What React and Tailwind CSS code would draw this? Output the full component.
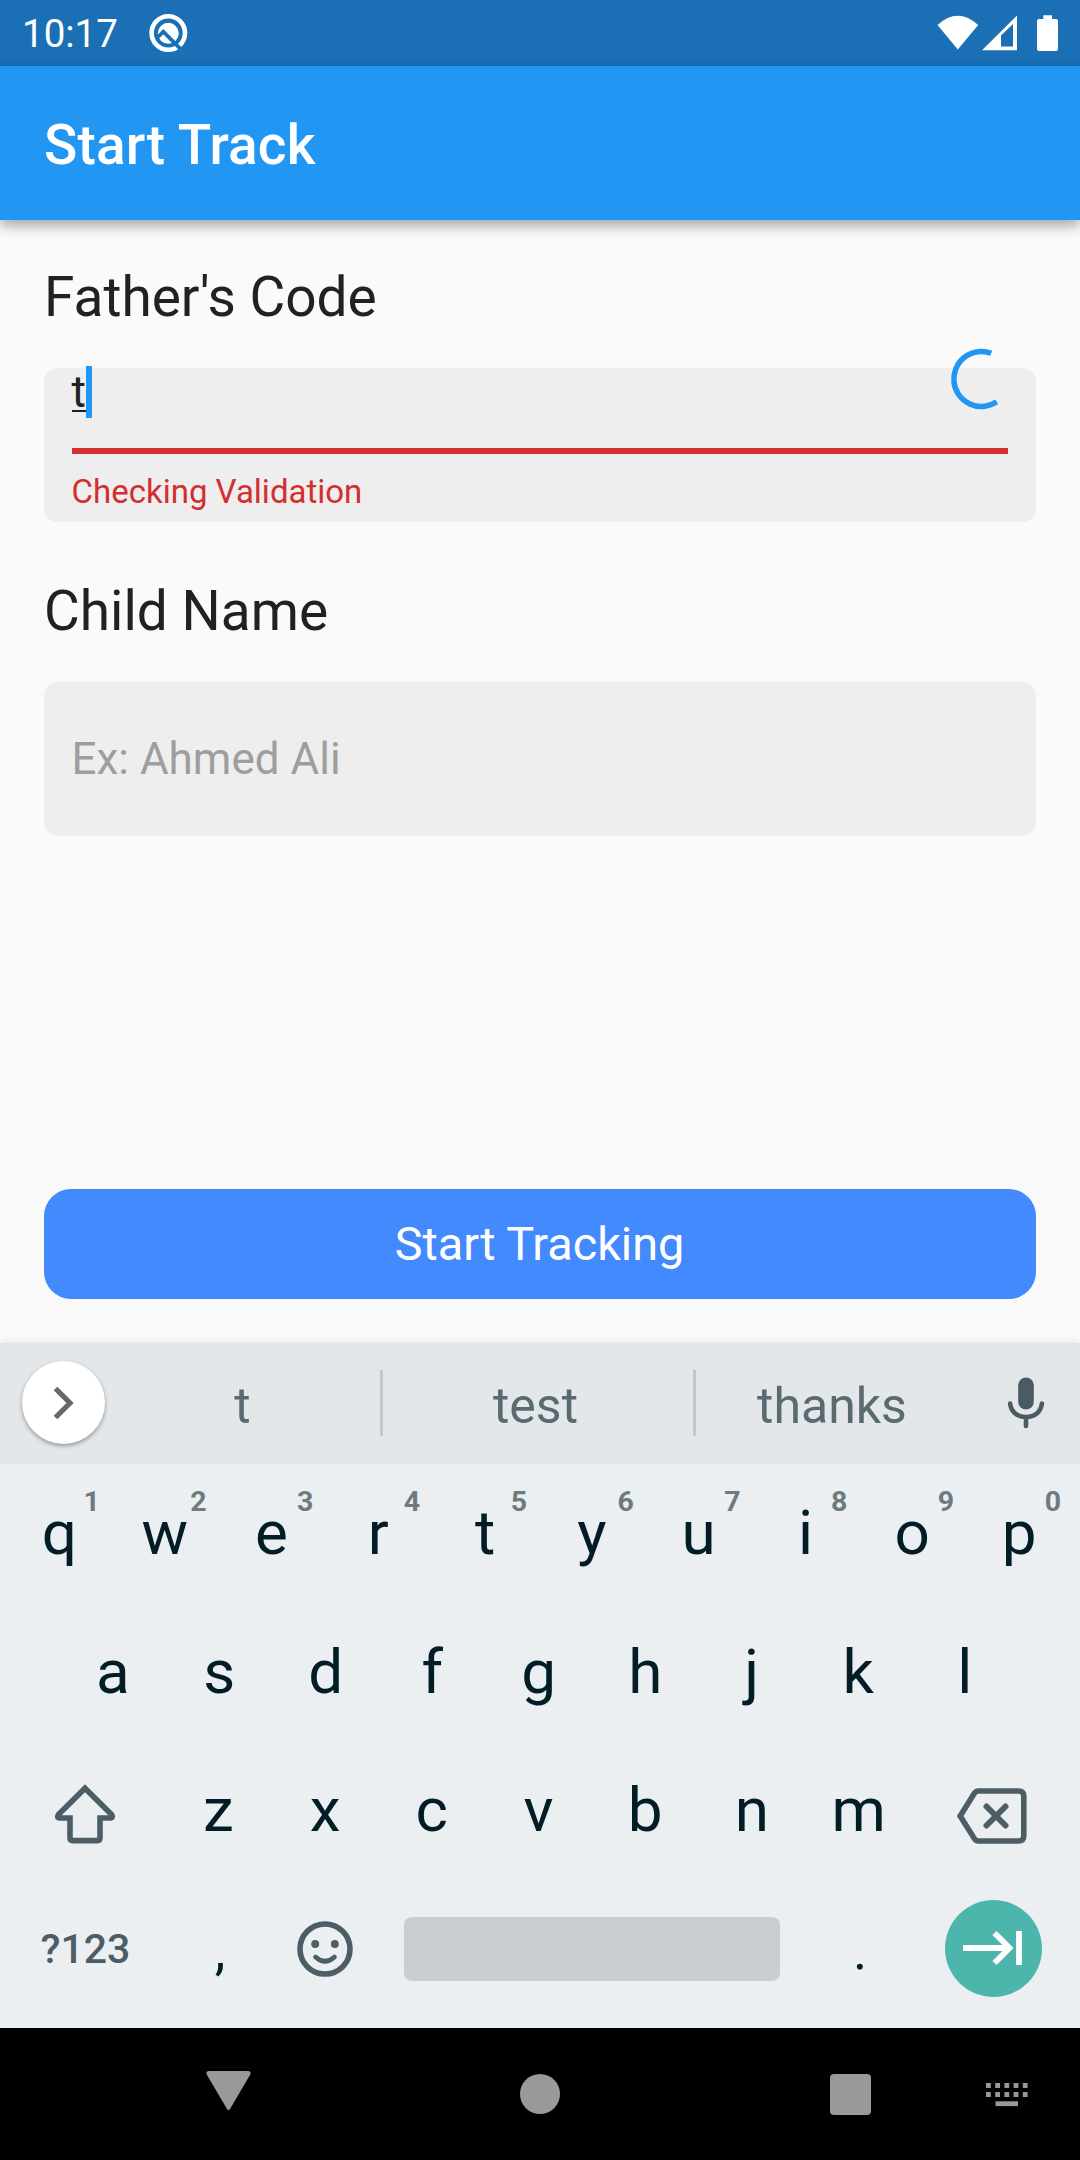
import React from "react";

const topRow = [
  ["q", "1"], ["w", "2"], ["e", "3"], ["r", "4"], ["t", "5"],
  ["y", "6"], ["u", "7"], ["i", "8"], ["o", "9"], ["p", "0"],
];
const homeRow = ["a", "s", "d", "f", "g", "h", "j", "k", "l"];
const bottomRow = ["z", "x", "c", "v", "b", "n", "m"];

function StatusBar() {
  return (
    <div className="flex h-[66px] items-center bg-[#1a6fb5] pl-[22px] pr-[22px] text-white">
      <span className="w-[127px] whitespace-nowrap pt-[2px] text-[38.5px] leading-[66px]">10:17</span>
      <svg className="h-[40px] w-[40px]" viewBox="0 0 40 40" fill="none">
        <circle cx="19.3" cy="20" r="16.7" stroke="#fff" strokeWidth="4.6" />
        <circle cx="19.3" cy="20.3" r="10.5" fill="#fff" />
        <path d="M7.500 25.500L14.300 18.700L34 38.300" stroke="#1a6fb5" strokeWidth="3.800" />
      </svg>
      <svg className="ml-auto h-[36px] w-[42px]" viewBox="0 0 42 36">
        <path d="M.5 10Q20.7-8.5 41.2 10L20.8 34.5Z" fill="#fff" />
      </svg>
      <svg className="ml-[3px] h-[36px] w-[35px]" viewBox="0 0 35 36">
        <path fillRule="evenodd" d="M0 35.2L35 .5V35.2ZM19 31.5H31V9L19 20.5Z" fill="#fff" />
      </svg>
      <svg className="ml-[20px] h-[36px] w-[21px]" viewBox="0 0 21 36">
        <path d="M6.3.3H15V4H19Q21 4 21 6V34Q21 36 19 36H2Q0 36 0 34V6Q0 4 2 4H6.3Z" fill="#fff" />
      </svg>
    </div>
  );
}

function SuggestionBar() {
  return (
    <div className="flex h-[121px] items-center bg-[#e3e7ea] text-[50px] text-[#5b6a71] shadow-[0_-2px_8px_rgba(0,0,0,0.07)]">
      <div className="mb-[2px] ml-[22px] flex h-[83px] w-[83px] items-center justify-center rounded-full bg-white shadow-[0_2px_4px_rgba(0,0,0,0.35)]">
        <svg className="h-[34px] w-[22px]" viewBox="0 0 22 34" fill="none">
          <path d="M2.5 2.5L17 17L2.5 31.5" stroke="#686868" strokeWidth="5.2" />
        </svg>
      </div>
      <span className="w-[275px] pt-[4px] text-center leading-[60px]">t</span>
      <span className="mb-[1px] h-[66px] w-[3px] bg-[#c3c7ca]" />
      <span className="w-[310px] pr-[5px] pt-[4px] text-center leading-[60px]">test</span>
      <span className="mb-[1px] h-[66px] w-[3px] bg-[#c3c7ca]" />
      <span className="w-[272px] pt-[4px] text-center leading-[60px]">thanks</span>
      <svg className="mb-[2px] ml-[39px] h-[52px] w-[38px]" viewBox="0 0 38 52" fill="none">
        <rect x="11.2" y="0.5" width="15.6" height="32" rx="7.8" fill="#4a5b63" />
        <path d="M3.1 26.5C4 35 10.5 40 19 40S34 35 34.9 26.5M19 40V49" stroke="#4a5b63" strokeWidth="4.6" strokeLinecap="round" />
      </svg>
    </div>
  );
}

function Keyboard() {
  return (
    <div className="h-[564px] bg-[#ebeff2] text-[62px] leading-[138.5px] text-[#021d26]">
      <div className="grid h-[138.5px] grid-cols-10 pl-[4.500px] pr-[7.500px] text-center">
        {topRow.map(([k, n]) => (
          <div key={k} className="relative first:pl-[3px]">
            {k}
            <span className="absolute right-[11.500px] top-[22px] text-[28.5px] font-bold leading-[32px] text-[#6d7a80]">{n}</span>
          </div>
        ))}
      </div>
      <div className="grid h-[138.5px] grid-cols-9 pl-[59.500px] pr-[62px] text-center">
        {homeRow.map((k) => <span key={k}>{k}</span>)}
      </div>
      <div className="flex h-[138.5px] items-center pl-[5px] pr-[8px]">
        <div className="flex w-[160px] justify-center">
          <svg className="mt-[7px] h-[62px] w-[62px]" viewBox="0 0 62 62" fill="none" stroke="#4d5d65" strokeWidth="5.6">
            <path d="M31 5.2L57.5 31.5Q59.5 35 56.3 35H46V55Q46 57.6 43.4 57.6H18.6Q16 57.6 16 55V35H5.7Q2.5 35 4.5 31.5Z" />
          </svg>
        </div>
        <div className="grid flex-1 grid-cols-7 text-center">
          {bottomRow.map((k) => <span key={k}>{k}</span>)}
        </div>
        <div className="flex w-[160px] justify-center">
          <svg className="mt-[11px] h-[56px] w-[70px]" viewBox="0 0 70 56" fill="none" stroke="#4d5d65" strokeWidth="5.6">
            <path d="M3.2 28L17.2 5.6Q18.8 3 21.5 3H61.5Q66.8 3 66.8 8.3V47.7Q66.8 53 61.5 53H21.5Q18.8 53 17.2 50.4Z" />
            <path d="M25.7 18.500L44.7 37.500M44.7 18.500L25.7 37.500" transform="translate(3.800 0)" strokeLinecap="round" strokeWidth="6" />
          </svg>
        </div>
      </div>
      <div className="flex h-[138.5px] items-center px-[5.500px]">
        <span className="w-[160px] pt-[1px] text-center text-[41px] font-medium text-[#4d5d65]">?123</span>
        <span className="w-[107px] pl-[2px] pt-[4px] text-center text-[54px]">,</span>
        <div className="flex w-[104px] justify-center">
          <svg className="h-[56px] w-[56px]" viewBox="0 0 56 56" fill="none" stroke="#4d5d65">
            <circle cx="28" cy="28" r="25" strokeWidth="5.6" />
            <circle cx="18.2" cy="23" r="4" fill="#4d5d65" stroke="none" />
            <circle cx="37.8" cy="23" r="4" fill="#4d5d65" stroke="none" />
            <path d="M18.5 36Q28 44.5 37.5 36" strokeWidth="4.6" strokeLinecap="round" />
          </svg>
        </div>
        <div className="ml-[27px] h-[64px] w-[376px] rounded-[8px] bg-[#c9cdd0]" />
        <span className="ml-[26px] w-[107px] pl-[2px] pt-[4px] text-center text-[54px]">.</span>
        <div className="ml-[32px] flex h-[97px] w-[97px] items-center justify-center rounded-full bg-[#4db6ac]">
          <svg className="mb-[1px] h-[36px] w-[60px]" viewBox="0 0 60 36" fill="none" stroke="#fff" strokeWidth="5.8">
            <path d="M0 18H46M31.5 3L46.5 18L31.5 33M56 1V35" />
          </svg>
        </div>
      </div>
    </div>
  );
}

function NavBar() {
  return (
    <div className="flex h-[132px] bg-black pl-[206px] pt-[42px]">
      <svg className="mt-[1px] h-[40px] w-[45px]" viewBox="0 0 45 40" fill="#999">
        <path d="M3 0H42Q46 0 44 4L24 38Q22.500 40.500 21 38L1 4Q-1 0 3 0Z" />
      </svg>
      <div className="ml-[269px] mt-[4px] h-[40px] w-[40px] rounded-full bg-[#999]" />
      <div className="ml-[270px] mt-[4px] h-[41px] w-[41px] rounded-[4px] bg-[#999]" />
      <svg className="ml-[115px] mt-[13px] h-[24px] w-[43px]" viewBox="0 0 43 24" fill="#999">
        {[0, 9.2, 18.4, 27.6, 36.8].map((x) => (
          <g key={x}>
            <rect x={x} y="0" width="4.800" height="5" />
            <rect x={x} y="9" width="4.800" height="5" />
          </g>
        ))}
        <rect x="9.500" y="18.300" width="22.500" height="4.800" />
      </svg>
    </div>
  );
}

export default function App() {
  return (
    <div className="flex h-[2160px] w-[1080px] flex-col overflow-hidden bg-[#fafafa] font-[Roboto,sans-serif] text-[#212121]">
      <StatusBar />
      <header className="h-[154px] bg-[#2196f3] pl-[44px] text-[55px] font-medium leading-[158px] tracking-[0.150px] text-white shadow-[0_6px_12px_rgba(0,0,0,0.33)]">
        Start Track
      </header>
      <main className="flex h-[1123px] flex-col px-[44px]">
        <h2 className="mt-[44px] h-[64px] text-[55px] leading-[66px]">Father's Code</h2>
        <div className="relative mt-[40px] h-[154px] rounded-[14px] bg-[#eeeeee] pl-[27.500px] pr-[28px]">
          <div className="flex h-[80px] text-[44px] leading-[48px]">
            <span className="h-[44px] w-[14.500px] border-b-[2.500px] border-[#212121]">t</span>
            <span className="-mt-[2px] h-[52px] w-[6px] bg-[#2196f3]" />
          </div>
          <div className="h-[6px] bg-[#d32f2f]" />
          <p className="mt-[18px] text-[33px] leading-[40px] text-[#d32f2f]">Checking Validation</p>
          <svg className="absolute right-[23px] top-[-21px] h-[65px] w-[65px]" viewBox="0 0 65 65" fill="none">
            <path d="M43.200 6.300A27.500 27.500 0 1 0 48.700 54.800" stroke="#2196f3" strokeWidth="5.500" />
          </svg>
        </div>
        <h2 className="mt-[56px] h-[64px] text-[55px] leading-[66px]">Child Name</h2>
        <div className="mt-[40px] h-[154px] rounded-[14px] bg-[#eeeeee] px-[27.500px] text-[44px] leading-[154px] text-[#9e9e9e]">
          Ex: Ahmed Ali
        </div>
        <button className="mb-[44px] mt-auto h-[110px] rounded-[27px] bg-[#448aff] pr-[1px] pt-[1px] text-center text-[46.750px] leading-[109px] text-white">
          Start Tracking
        </button>
      </main>
      <SuggestionBar />
      <Keyboard />
      <NavBar />
    </div>
  );
}
